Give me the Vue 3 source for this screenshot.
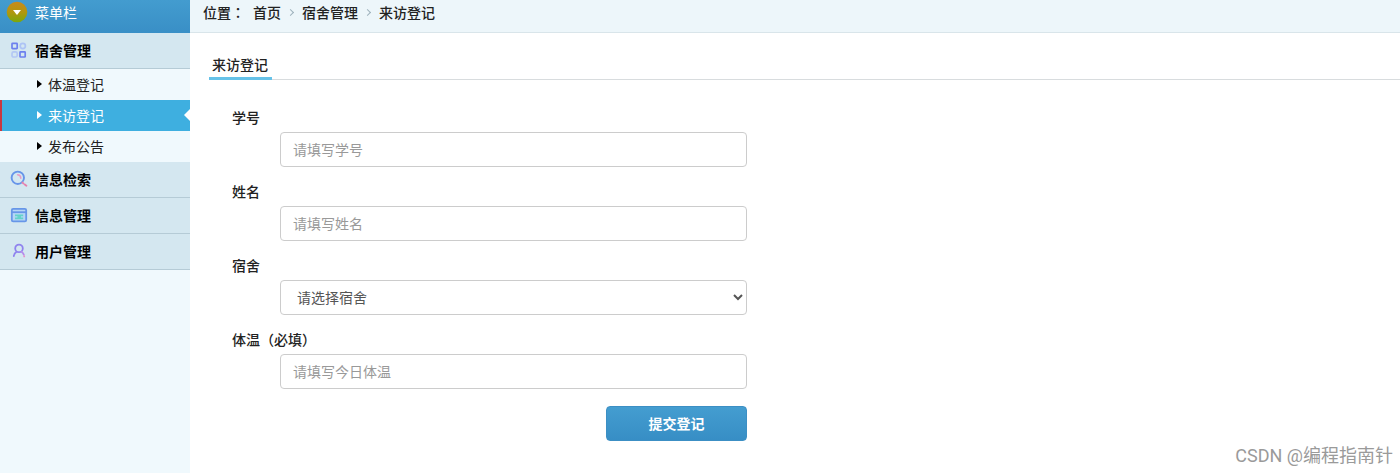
<template>
  <div class="layout">
    <aside class="sidebar">
      <div class="menu-title">
        <svg class="menu-badge" viewBox="0 0 22 22">
          <defs>
            <linearGradient id="badgeFill" x1="0" y1="0" x2="0" y2="1">
              <stop offset="0" stop-color="#c98a1c" />
              <stop offset="0.5" stop-color="#b2960e" />
              <stop offset="1" stop-color="#7aa80c" />
            </linearGradient>
          </defs>
          <circle cx="11" cy="11" r="10.3" fill="url(#badgeFill)" />
          <path d="M7 9h8l-4 5z" fill="#fff" />
        </svg>
        菜单栏
      </div>
      <nav>
        <div v-for="group in menus" :key="group.name" class="menu-group">
          <button type="button" class="group-title" @click="group.open = !group.open">
            <svg v-if="group.icon === 'grid'" class="group-icon" viewBox="0 0 18 18" fill="none" stroke-width="1.7">
              <rect x="2" y="2.4" width="5.2" height="5.2" rx="0.6" stroke="#6c80ee" />
              <circle cx="12.8" cy="5" r="2.6" stroke="#adc3f5" />
              <rect x="2" y="10.8" width="5.2" height="5.2" rx="1.6" stroke="#b3c8f4" />
              <rect x="10" y="10.8" width="5.2" height="5.2" rx="0.6" stroke="#6c80ee" />
            </svg>
            <svg v-else-if="group.icon === 'search'" class="group-icon" viewBox="0 0 18 18" fill="none" stroke-width="1.9" stroke-linecap="round">
              <circle cx="7.8" cy="7.8" r="6.2" stroke="#6795e9" />
              <path d="M7.6 4.8a3.4 3.4 0 0 1 3.2 3.4" stroke="#e79cc4" stroke-width="1.5" />
              <path d="M12.4 12.6l1 .8M14.8 14.6l1.6 1.2" stroke="#e681ae" />
            </svg>
            <svg v-else-if="group.icon === 'window'" class="group-icon" viewBox="0 0 18 18" fill="none" stroke-width="1.8">
              <rect x="1.8" y="2.8" width="14.4" height="12.6" rx="1.4" fill="#b5d6f5" stroke="#6796e8" />
              <path d="M2 6.2h14" stroke="#6796e8" />
              <path d="M5 9.4h8.2M5 12.4h8.2" stroke="#63d3c9" />
              <path d="M7.4 11h3.6" stroke="#63d3c9" />
            </svg>
            <svg v-else class="group-icon" viewBox="0 0 18 18" fill="none" stroke-width="1.8" stroke-linecap="round">
              <circle cx="9" cy="6.4" r="3.8" stroke="#8f83ee" />
              <path d="M6.6 9.8c-1.8 1-2.6 2.4-2.8 4.4" stroke="#8f83ee" />
              <path d="M11.4 9.8c1.2.8 2 1.8 2.4 2.8" stroke="#b58ceb" />
              <path d="M14.2 14.2v.2" stroke="#e78fc8" />
            </svg>
            {{ group.name }}
          </button>
          <ul v-if="group.open && group.children.length" class="sub-menu">
            <li v-for="item in group.children" :key="item">
              <a href="#" class="sub-link" :class="{ active: item === current }" @click.prevent="current = item">{{ item }}</a>
            </li>
          </ul>
        </div>
      </nav>
    </aside>

    <main class="main">
      <div class="place">
        <span class="place-label">位置：</span>
        <ul class="place-list">
          <li v-for="crumb in crumbs" :key="crumb">
            <a href="#">{{ crumb }}</a>
          </li>
        </ul>
      </div>

      <div class="form-title"><h1>来访登记</h1></div>

      <form class="visit-form" @submit.prevent>
        <div class="form-item">
          <label for="studentNo">学号</label>
          <input id="studentNo" v-model="form.studentNo" type="text" placeholder="请填写学号" />
        </div>
        <div class="form-item">
          <label for="name">姓名</label>
          <input id="name" v-model="form.name" type="text" placeholder="请填写姓名" />
        </div>
        <div class="form-item">
          <label for="dorm">宿舍</label>
          <select id="dorm" v-model="form.dorm">
            <option value="">请选择宿舍</option>
          </select>
        </div>
        <div class="form-item">
          <label for="temperature">体温（必填）</label>
          <input id="temperature" v-model="form.temperature" type="text" placeholder="请填写今日体温" />
        </div>
        <button type="submit" class="submit-button">提交登记</button>
      </form>
    </main>

    <div class="watermark">CSDN @编程指南针</div>
  </div>
</template>

<script setup>
import { reactive, ref } from 'vue';

const menus = reactive([
  { name: '宿舍管理', icon: 'grid', open: true, children: ['体温登记', '来访登记', '发布公告'] },
  { name: '信息检索', icon: 'search', open: false, children: [] },
  { name: '信息管理', icon: 'window', open: false, children: [] },
  { name: '用户管理', icon: 'user', open: false, children: [] }
]);

const current = ref('来访登记');
const crumbs = ['首页', '宿舍管理', '来访登记'];

const form = reactive({
  studentNo: '',
  name: '',
  dorm: '',
  temperature: ''
});
</script>

<style>
body {
  margin: 0;
  background-color: #fff;
}
</style>

<style scoped>
.layout {
  position: relative;
  display: flex;
  min-height: 100vh;
  font-family: "Noto Sans CJK SC", sans-serif;
  font-size: 14px;
  line-height: 20px;
  color: #222;
}

.layout *,
.layout *::before,
.layout *::after {
  box-sizing: border-box;
}

ul {
  margin: 0;
  padding: 0;
  list-style: none;
}

a {
  color: inherit;
  text-decoration: none;
}

button,
input,
select {
  font-family: inherit;
  font-size: 14px;
}

/* 左侧菜单 */
.sidebar {
  flex: none;
  width: 190px;
  background-color: #f0f9fd;
}

.menu-title {
  display: flex;
  align-items: center;
  gap: 7px;
  height: 33px;
  padding: 0 6px 9px;
  background: linear-gradient(#439ccf, #398fc6);
  color: #fff;
}

.menu-badge {
  width: 22px;
  height: 22px;
}

.group-title {
  display: flex;
  align-items: center;
  gap: 7px;
  width: 100%;
  height: 36px;
  padding: 0 10px 1px;
  border: none;
  border-bottom: 1px solid #b5cbd6;
  background-color: #d4e7f0;
  color: #000;
  font-weight: bold;
  cursor: pointer;
}

.group-icon {
  width: 18px;
  height: 18px;
}

.sub-link {
  position: relative;
  display: flex;
  align-items: center;
  gap: 6px;
  height: 31px;
  padding: 0 0 2px 37px;
}

.sub-link::before {
  content: "";
  border: 4px solid transparent;
  border-left: 5px solid #000;
  border-right: none;
}

.sub-link.active {
  padding-left: 35px;
  border-left: 2px solid #c8373f;
  background-color: #3eafe0;
  color: #fff;
}

.sub-link.active::before {
  border-left-color: #fff;
}

.sub-link.active::after {
  content: "";
  position: absolute;
  top: 9px;
  right: 0;
  border: 6px solid transparent;
  border-right-color: #fff;
  border-left: none;
}

/* 右侧内容 */
.main {
  flex: 1;
  min-width: 0;
}

.place {
  display: flex;
  gap: 8px;
  height: 33px;
  padding: 2px 13px 0;
  border-bottom: 1px solid #d9e5ea;
  background-color: #edf6fa;
  font-weight: 500;
}

/* 繁体字形的冒号居中 */
.place-label {
  font-family: "Noto Sans CJK TC", sans-serif;
}

.place-list {
  display: flex;
}

.place-list li {
  display: flex;
  align-items: center;
  height: 20px;
}

.place-list li + li::before {
  content: "";
  width: 5px;
  height: 5px;
  margin: 0 9px 0 7px;
  border-top: 1px solid #9eb2bc;
  border-right: 1px solid #9eb2bc;
  transform: rotate(45deg);
}

.form-title {
  display: flex;
  margin: 20px 0 0 19px;
  border-bottom: 1px solid #d8dcde;
}

.form-title h1 {
  margin: 0 0 -1px;
  padding: 1px 4px 3px 3px;
  border-bottom: 3px solid #66c2e8;
  font-size: 14px;
  font-weight: 500;
  line-height: 20px;
}

.visit-form {
  display: flex;
  flex-direction: column;
  max-width: 515px;
  margin: 27px 0 32px 42px;
}

.form-item {
  display: flex;
  flex-direction: column;
  gap: 5px;
  margin-bottom: 14px;
}

.form-item label {
  font-weight: 500;
}

.form-item input,
.form-item select {
  height: 35px;
  margin-left: 48px;
  padding: 0 12px 1px;
  border: 1px solid #ccc;
  border-radius: 4px;
  background-color: #fff;
  color: #555;
}

.form-item select {
  padding-right: 0;
}

.form-item input::placeholder {
  color: #999;
}

.submit-button {
  align-self: flex-end;
  width: 141px;
  height: 35px;
  margin-top: 3px;
  padding: 0 0 2px;
  border: 1px solid #3c8fc4;
  border-radius: 4px;
  background: linear-gradient(#449dd0, #378ec5);
  color: #fff;
  font-weight: bold;
  cursor: pointer;
}

.watermark {
  position: absolute;
  right: 7px;
  bottom: 5px;
  font-family: Roboto, "Noto Sans CJK SC", sans-serif;
  font-size: 18px;
  line-height: 24px;
  color: #9a9a9a;
}
</style>
